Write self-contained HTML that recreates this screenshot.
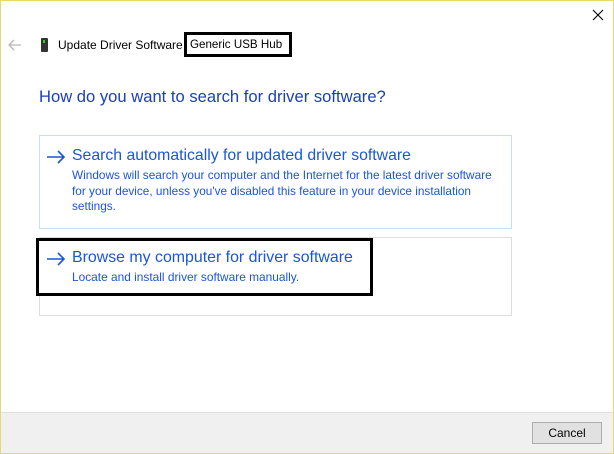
<!DOCTYPE html>
<html><head><meta charset="utf-8"><style>
*{margin:0;padding:0;box-sizing:border-box}
body{width:614px;height:454px;position:relative;background:#fff;font-family:"Liberation Sans",sans-serif;overflow:hidden}
.frame{position:absolute;left:0;top:0;width:614px;height:454px;border:1px solid #e8d96a}
.abs{position:absolute;white-space:nowrap}
.box{position:absolute;border:1px solid #c9def0}
.t{color:#1a56d6}
</style></head><body>
<div class="abs" style="left:1px;top:412px;width:612px;height:41px;background:#f0f0f0;border-top:1px solid #dfdfdf"></div>
<div class="frame"></div>
<svg class="abs" style="left:592px;top:9px" width="12" height="12"><path d="M1 1L11 11M11 1L1 11" stroke="#000" stroke-width="1.1"/></svg>
<svg class="abs" style="left:8px;top:39px" width="14" height="12"><path d="M1 6H13M6 1L1 6L6 11" stroke="#b8b8b8" stroke-width="1.3" fill="none"/></svg>
<div class="abs" style="left:41px;top:38px;width:7px;height:14px;background:#333;border-radius:1px"></div>
<div class="abs" style="left:43px;top:40px;width:2px;height:3px;background:#2ed12e"></div>
<div class="abs" style="left:58px;top:38px;font-size:12px;color:#000">Update Driver Software - </div>
<div class="abs" style="left:184px;top:32px;width:108px;height:25px;border:3px solid #000;background:#fff"></div>
<div class="abs" style="left:190px;top:38px;font-size:11.6px;color:#000">Generic USB Hub</div>
<div class="abs t" style="left:39px;top:87px;font-size:16.6px;color:#1b3fb8">How do you want to search for driver software?</div>
<div class="box" style="left:39px;top:135px;width:473px;height:94px"></div>
<svg class="abs" style="left:46px;top:150px" width="20" height="14"><path d="M1 7H18M12 1L18 7L12 13" stroke="#1a56d6" stroke-width="1.6" fill="none"/></svg>
<div class="abs t" style="left:72px;top:147px;font-size:15.8px">Search automatically for updated driver software</div>
<div class="abs t" style="left:72px;top:168px;font-size:11.8px;line-height:15.5px">Windows will search your computer and the Internet for the latest driver software<br>for your device, unless you've disabled this feature in your device installation<br>settings.</div>
<div class="box" style="left:39px;top:237px;width:473px;height:79px;border-color:#dedede"></div>
<div class="abs" style="left:36px;top:238px;width:337px;height:58px;border:3px solid #000;background:#fff"></div>
<svg class="abs" style="left:46px;top:252px" width="20" height="14"><path d="M1 7H18M12 1L18 7L12 13" stroke="#1a56d6" stroke-width="1.6" fill="none"/></svg>
<div class="abs t" style="left:72px;top:249px;font-size:15.9px">Browse my computer for driver software</div>
<div class="abs t" style="left:72px;top:270px;font-size:11.9px">Locate and install driver software manually.</div>
<div class="abs" style="left:532px;top:422px;width:70px;height:22px;border:1px solid #adadad;background:#e1e1e1;font-size:12px;text-align:center;line-height:20px">Cancel</div>
</body></html>
